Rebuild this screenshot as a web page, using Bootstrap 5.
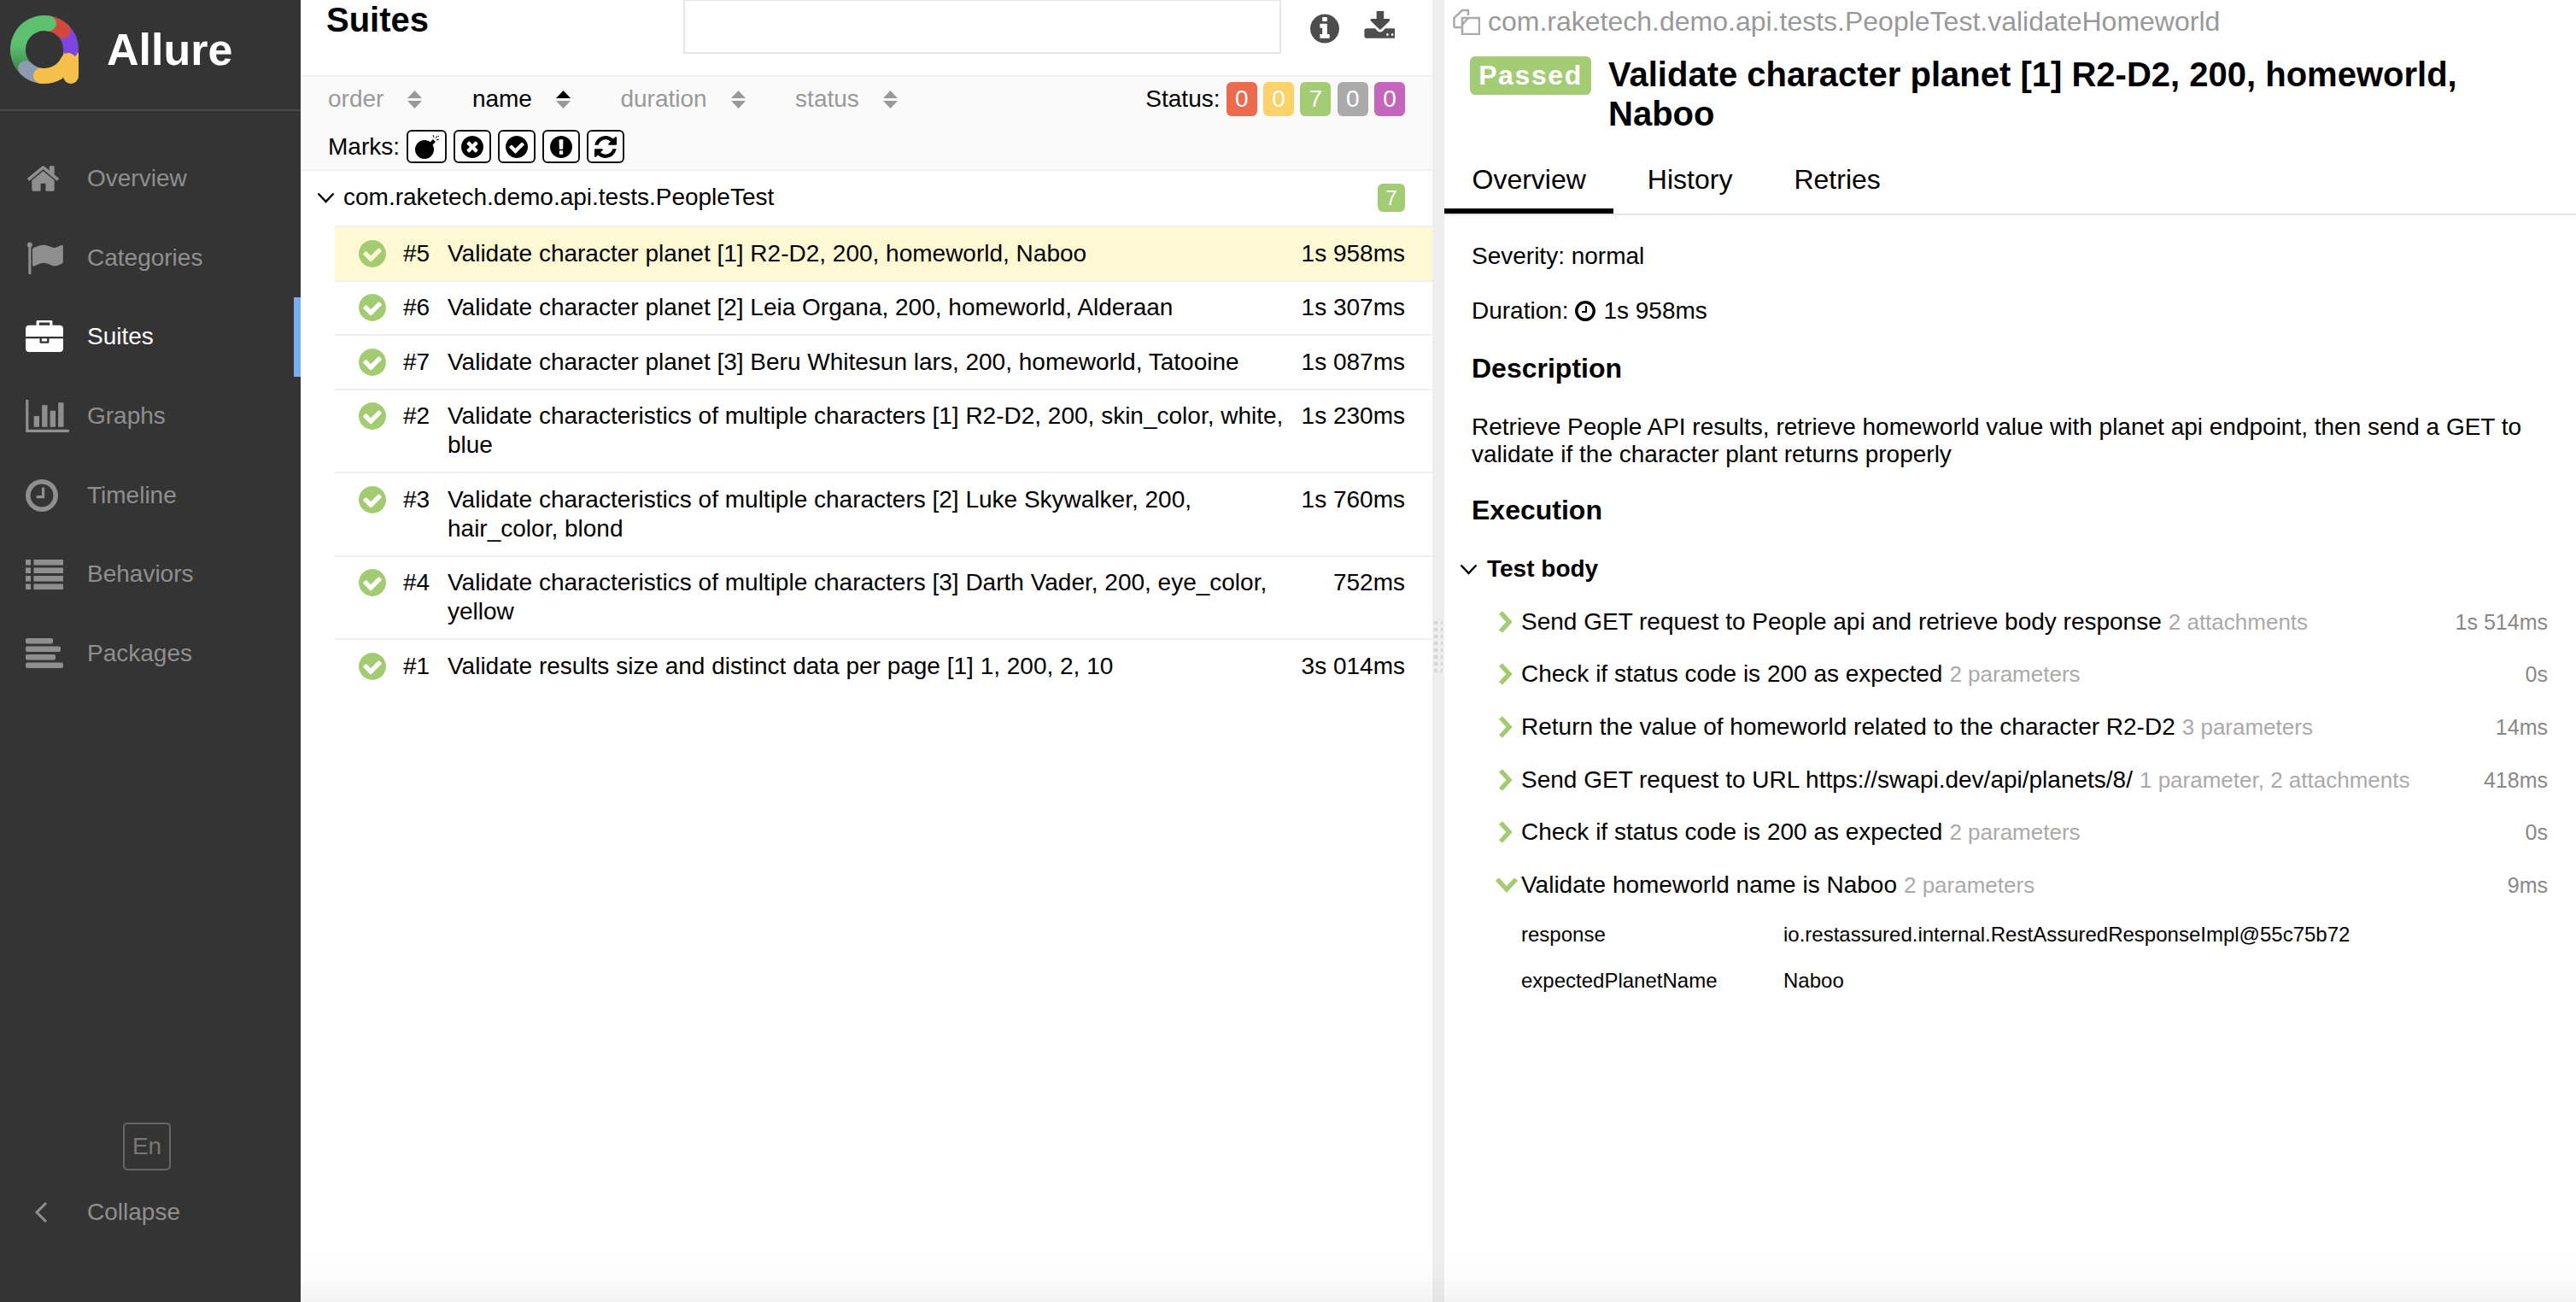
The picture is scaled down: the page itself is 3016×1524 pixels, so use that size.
<!DOCTYPE html>
<html lang="en">
<head>
    <meta charset="UTF-8">
    <meta name="viewport" content="width=device-width, initial-scale=1">
    <title>Allure Report</title>
    <link href="https://cdn.jsdelivr.net/npm/bootstrap@5.3.0/dist/css/bootstrap.min.css" rel="stylesheet">
    <style>
        html, body { height: 100%; overflow: hidden; }
        body { font-family: "Liberation Sans", Arial, sans-serif; font-size: 28px; line-height: 34px; color: #000; background: #fff; }

        /* Sidebar */
        .side-bar { width: 352px; flex: 0 0 352px; background: #343434; color: #999; }
        .side-brand { height: 130px; border-bottom: 2px solid #4a4a4a; padding: 18px 0 0 12px; gap: 33px; }
        .side-brand span { font-size: 52px; line-height: 80px; font-weight: 700; color: #fff; }
        .side-menu { padding-top: 33px; }
        .side-item { height: 92.6px; position: relative; color: #8f8f8f; }
        .side-item.on { color: #fff; }
        .side-item.on::after { content: ""; position: absolute; right: 0; top: 0; bottom: 0; width: 8px; background: #76b0ee; }
        .side-ico { width: 102px; padding-left: 30px; flex: none; display: flex; }
        .side-ico svg { fill: currentColor; display: block; }
        .lang-btn { width: 56px; height: 56px; margin: 0 0 32px 144px; border: 2px solid #666; border-radius: 5px; color: #777; font-size: 28px; }
        .side-foot { padding-bottom: 88px; }
        .collapse-row { color: #8f8f8f; height: 34px; }

        /* Suites pane */
        .suites-pane { width: 1325px; flex: 0 0 1325px; }
        .suites-head { height: 90px; border-bottom: 2px solid #f0f0f0; padding-left: 30px; }
        .suites-head h1 { font-size: 40px; line-height: 46px; font-weight: 700; margin: 0; width: 418px; flex: none; }
        .search-box { width: 700px; height: 64px; margin-top: -1px; border: 2px solid #e6e6e6; border-radius: 0; }
        .head-ico { margin-top: -1px; }
        .sort-bar { height: 110px; background: #fafafa; border-bottom: 2px solid #f0f0f0; padding: 9px 32px 0 32px; }
        .sort-line { height: 34px; }
        .sort-item { color: #999; gap: 28px; margin-right: 58.500px; }
        .sort-item.on { color: #000; }
        .carets { width: 17px; flex: none; display: block; }
        .st-badge { width: 36px; height: 40px; border-radius: 6px; color: #fff; font-size: 28px; line-height: 40px; text-align: center; margin-left: 7.300px; }
        .marks-line { margin-top: 19px; gap: 8px; }
        .mark-btn { width: 44px; height: 39px; border: 2px solid #111; border-radius: 6px; background: #fff; padding: 0; }
        .mark-btn.wide { width: 47px; }
        .c-failed { background: #ec6a4e; }
        .c-broken { background: #f9d269; }
        .c-passed { background: #a4cc74; }
        .c-skipped { background: #aaaaaa; }
        .c-unknown { background: #c565bb; }
        .group-row { height: 64px; padding: 0 32px 2px 19px; gap: 10px; }
        .group-row .count { width: 32px; height: 33px; border-radius: 6px; color: #fff; font-size: 24px; line-height: 33px; text-align: center; }
        .case-list { margin-left: 40px; border-radius: 0; }
        .case-list .case-row { border: 0; border-top: 2px solid #f0f0f0; border-radius: 0; padding: 13.750px 32px 13.750px 28px; background: transparent; color: #000; font-size: 28px; line-height: 34px; }
        .case-list .case-row.picked { background: #fef9d2; }
        .case-row .tick { width: 32px; height: 32px; fill: #a3cc72; flex: none; margin: 1px 20px 0 0; }
        .case-row .num { width: 52px; flex: none; }
        .case-row .title-text { width: 991px; flex: none; }

        /* Gutter */
        .gutter { width: 14px; flex: 0 0 14px; background: #eceef0; position: relative; }
        .gutter svg { position: absolute; left: 2px; top: 727px; }

        /* Test pane */
        .test-pane { flex: 1 1 auto; min-width: 0; }
        .full-name { height: 50px; padding-left: 10px; color: #999; font-size: 32px; gap: 9px; }
        .title-line { padding: 16px 40px 0 30px; gap: 20px; min-height: 0; }
        .status-pill { background: #a4cc74; color: #fff; font-weight: 700; font-size: 32px; line-height: 45px; height: 45px; width: 142px; border-radius: 6px; text-align: center; letter-spacing: 1.600px; flex: none; }
        .title-line h2 { font-size: 40px; line-height: 46px; font-weight: 700; margin: -2px 0 0; width: 1100px; }
        .tab-line { height: 68px; margin-top: 28px; border-bottom: 2px solid #e5e5e5; gap: 7px; }
        .tab-link { padding: 4px 32.500px 0; font-size: 32px; line-height: 44px; height: 66px; color: #000; border-bottom: 6px solid transparent; }
        .tab-link.on { border-bottom-color: #000; }
        .test-body { padding: 31px 33px 0 32px; }
        .meta-line { height: 34px; margin-bottom: 30px; }
        .meta-line svg { fill: #000; margin: 0 9px 0 0; }
        .sec-title { font-size: 32px; line-height: 40px; font-weight: 700; margin: 0; }
        .desc-text { margin: 33px 0 0; line-height: 32px; width: 1250px; }
        .exec-title { margin-top: 29px; }
        .body-toggle { height: 62px; margin: 18px 0 0 -14px; font-weight: 700; gap: 11px; }
        .step-line { height: 61.600px; }
        .step-arrow { width: 26px; flex: none; margin: 0 4px 0 28px; display: block; }
        .step-extra { color: #aaa; font-size: 26px; margin-left: 8px; }
        .step-time { color: #888; font-size: 25px; margin-left: auto; }
        .param-line { height: 54px; font-size: 24px; padding-left: 58px; }
        .param-line .pn { width: 307px; flex: none; }

        /* fade at the bottom edge of the window */
        .bottom-fade { position: absolute; left: 352px; right: 0; bottom: 0; height: 60px; pointer-events: none; background: linear-gradient(to bottom, rgba(0,0,0,0), rgba(0,0,0,.012) 50%, rgba(0,0,0,.045)); }
    </style>
</head>
<body>
<div class="d-flex h-100 position-relative">

    <!-- Sidebar -->
    <aside class="side-bar d-flex flex-column">
        <div class="side-brand d-flex align-items-start">
            <svg width="80" height="80" viewBox="0 0 80 80" fill="none" stroke-width="18" stroke-linecap="round">
                <defs>
                    <linearGradient id="gr" x1="0" y1="0" x2="0" y2="1"><stop offset="0.5" stop-color="#5cc06e"/><stop offset="1" stop-color="#3d8a50"/></linearGradient>
                </defs>
                <path d="M71 46V71" stroke="#f4bf4b"/>
                <path d="M62 18A31 31 0 0 1 71 40" stroke="#7b45e0"/>
                <path d="M45 9.500A31 31 0 0 1 62 18" stroke="#d2483f"/>
                <path d="M45 9.500A31 31 0 0 0 18 62" stroke="url(#gr)"/>
                <path d="M18 62A31 31 0 0 0 36 70.700" stroke="#8c9bb0"/>
                <path d="M36 70.700A31 31 0 0 0 68 53" stroke="#f4bf4b"/>
            </svg>
            <span>Allure</span>
        </div>
        <nav class="side-menu">
            <div class="side-item d-flex align-items-center">
                <span class="side-ico"><svg width="41" height="36" viewBox="0 0 1792 1536"><path transform="translate(0,-128)" d="M1472 992v480q0 26-19 45t-45 19h-384v-384h-256v384h-384q-26 0-45-19t-19-45v-480q0-1 .5-3t.5-3l575-474 575 474q1 2 1 6zm223-69l-62 74q-8 9-21 11h-3q-13 0-21-7l-692-577-692 577q-12 8-24 7-13-2-21-11l-62-74q-8-10-7-23.500t11-21.500l719-599q32-26 76-26t76 26l244 204v-195q0-14 9-23t23-9h192q14 0 23 9t9 23v408l219 182q10 8 11 21.500t-7 23.500z"/></svg></span>
                <span>Overview</span>
            </div>
            <div class="side-item d-flex align-items-center">
                <span class="side-ico"><svg width="44" height="39" viewBox="0 64 1792 1600"><path d="M320 256q0 72-64 110v1266q0 13-9.500 22.500t-22.500 9.500h-64q-13 0-22.500-9.500t-9.500-22.500v-1266q-64-38-64-110 0-53 37.500-90.500t90.500-37.500 90.500 37.500 37.500 90.500zm1472 64v763q0 25-12.500 38.500t-39.500 27.500q-215 116-369 116-61 0-123.500-22t-108.500-48-115.500-48-142.500-22q-192 0-464 146-17 9-33 9-26 0-45-19t-19-45v-742q0-32 31-55 21-14 79-43 236-120 421-120 107 0 200 29t219 88q38 19 88 19 54 0 117.500-21t110-47 88-47 54.500-21q26 0 45 19t19 45z"/></svg></span>
                <span>Categories</span>
            </div>
            <div class="side-item on d-flex align-items-center">
                <span class="side-ico"><svg width="44" height="38" viewBox="0 32 1792 1536"><path d="M640 256h512v-128h-512v128zm1152 640v480q0 66-47 113t-113 47h-1472q-66 0-113-47t-47-113v-480h672v160q0 26 19 45t45 19h320q26 0 45-19t19-45v-160h672zm-768 0v128h-256v-128h256zm768-480v384h-1792v-384q0-66 47-113t113-47h352v-160q0-40 28-68t68-28h576q40 0 68 28t28 68v160h352q66 0 113 47t47 113z"/></svg></span>
                <span>Suites</span>
            </div>
            <div class="side-item d-flex align-items-center">
                <span class="side-ico"><svg width="51" height="38" viewBox="0 128 2048 1536"><path d="M640 896v512h-256v-512h256zm384-512v1024h-256v-1024h256zm1024 1152v128h-2048v-1536h128v1408h1920zm-640-896v768h-256v-768h256zm384-384v1152h-256v-1152h256z"/></svg></span>
                <span>Graphs</span>
            </div>
            <div class="side-item d-flex align-items-center">
                <span class="side-ico"><svg width="38" height="38" viewBox="128 128 1536 1536"><path d="M1024 544v448q0 14-9 23t-23 9h-320q-14 0-23-9t-9-23v-64q0-14 9-23t23-9h224v-352q0-14 9-23t23-9h64q14 0 23 9t9 23zm416 352q0-148-73-273t-198-198-273-73-273 73-198 198-73 273 73 273 198 198 273 73 273-73 198-198 73-273zm224 0q0 209-103 385.500t-279.500 279.500-385.500 103-385.500-103-279.500-279.500-103-385.500 103-385.500 279.500-279.500 385.500-103 385.500 103 279.500 279.500 103 385.500z"/></svg></span>
                <span>Timeline</span>
            </div>
            <div class="side-item d-flex align-items-center">
                <span class="side-ico"><svg width="44" height="35" viewBox="0 0 44 35"><rect width="6" height="6.500"/><rect x="9.500" width="34.500" height="6.500"/><rect y="9.500" width="6" height="6.500"/><rect x="9.500" y="9.500" width="34.500" height="6.500"/><rect y="19" width="6" height="6.500"/><rect x="9.500" y="19" width="34.500" height="6.500"/><rect y="28.500" width="6" height="6.500"/><rect x="9.500" y="28.500" width="34.500" height="6.500"/></svg></span>
                <span>Behaviors</span>
            </div>
            <div class="side-item d-flex align-items-center">
                <span class="side-ico"><svg width="44" height="35" viewBox="0 0 44 35"><rect width="32" height="6.500" rx="2"/><rect y="9.500" width="41" height="6.500" rx="2"/><rect y="19" width="35" height="6.500" rx="2"/><rect y="28.500" width="44" height="6.500" rx="2"/></svg></span>
                <span>Packages</span>
            </div>
        </nav>
        <div class="side-foot mt-auto">
            <div class="lang-btn d-flex align-items-center justify-content-center">En</div>
            <div class="collapse-row d-flex align-items-center">
                <span class="side-ico"><svg style="margin-left:10px" width="16" height="26" viewBox="0 0 16 26" fill="none"><path d="M14 2L3 13L14 24" fill="none" stroke="#8f8f8f" stroke-width="3"/></svg></span>
                <span>Collapse</span>
            </div>
        </div>
    </aside>

    <!-- Suites pane -->
    <section class="suites-pane d-flex flex-column">
        <div class="suites-head d-flex align-items-start">
            <h1>Suites</h1>
            <input class="form-control search-box" type="text" aria-label="Search">
            <svg class="head-ico" style="margin:16px 0 0 34px" width="34" height="35" viewBox="128 128 1536 1536" fill="#4d4d4d"><path d="M1152 1376v-160q0-14-9-23t-23-9h-96v-512q0-14-9-23t-23-9h-320q-14 0-23 9t-9 23v160q0 14 9 23t23 9h96v320h-96q-14 0-23 9t-9 23v160q0 14 9 23t23 9h448q14 0 23-9t9-23zm-128-896v-160q0-14-9-23t-23-9h-192q-14 0-23 9t-9 23v160q0 14 9 23t23 9h192q14 0 23-9t9-23zm640 416q0 209-103 385.500t-279.500 279.500-385.500 103-385.500-103-279.500-279.500-103-385.500 103-385.500 279.500-279.500 385.500-103 385.500 103 279.500 279.500 103 385.500z"/></svg>
            <svg class="head-ico" style="margin:13px 0 0 28px" width="37" height="35" viewBox="0 128 1664 1536" fill="#4d4d4d"><path d="M1344 1344q0-26-19-45t-45-19-45 19-19 45 19 45 45 19 45-19 19-45zm256 0q0-26-19-45t-45-19-45 19-19 45 19 45 45 19 45-19 19-45zm128-224v320q0 40-28 68t-68 28h-1472q-40 0-68-28t-28-68v-320q0-40 28-68t68-28h465l135 136q58 56 136 56t136-56l136-136h464q40 0 68 28t28 68zm-325-569q17 41-14 70l-448 448q-18 19-45 19t-45-19l-448-448q-31-29-14-70 17-39 59-39h256v-448q0-26 19-45t45-19h256q26 0 45 19t19 45v448h256q42 0 59 39z"/></svg>
        </div>

        <div class="sort-bar">
            <div class="sort-line d-flex align-items-center">
                <div class="sort-item d-flex align-items-center"><span>order</span><svg class="carets" height="21" viewBox="0 0 17 21"><path d="M8.500 0L17 9H0z" fill="#999"/><path d="M8.500 21L17 12H0z" fill="#999"/></svg></div>
                <div class="sort-item on d-flex align-items-center"><span>name</span><svg class="carets" height="21" viewBox="0 0 17 21"><path d="M8.500 0L17 9H0z" fill="#000"/><path d="M8.500 21L17 12H0z" fill="#999"/></svg></div>
                <div class="sort-item d-flex align-items-center"><span>duration</span><svg class="carets" height="21" viewBox="0 0 17 21"><path d="M8.500 0L17 9H0z" fill="#999"/><path d="M8.500 21L17 12H0z" fill="#999"/></svg></div>
                <div class="sort-item d-flex align-items-center"><span>status</span><svg class="carets" height="21" viewBox="0 0 17 21"><path d="M8.500 0L17 9H0z" fill="#999"/><path d="M8.500 21L17 12H0z" fill="#999"/></svg></div>
                <div class="ms-auto d-flex align-items-center">
                    <span>Status:</span>
                    <span class="st-badge c-failed">0</span>
                    <span class="st-badge c-broken">0</span>
                    <span class="st-badge c-passed">7</span>
                    <span class="st-badge c-skipped">0</span>
                    <span class="st-badge c-unknown">0</span>
                </div>
            </div>
            <div class="marks-line d-flex align-items-center">
                <span>Marks:</span>
                <button class="mark-btn wide d-flex align-items-center justify-content-center" type="button" aria-label="flaky">
                    <svg width="32" height="30" viewBox="0 0 32 30"><circle cx="13" cy="18" r="11"/><path d="M19 10l4-4 3 3-4 4z"/><path d="M26 5l2-3M27 7l3-1M24 4l-1-3M29 3l1-1" stroke="#000" stroke-width="1" fill="none"/></svg>
                </button>
                <button class="mark-btn d-flex align-items-center justify-content-center" type="button" aria-label="new failed"><svg width="26" height="26" viewBox="128 128 1536 1536"><path d="M1277 1122q0-26-19-45l-181-181 181-181q19-19 19-45 0-27-19-46l-90-90q-19-19-46-19-26 0-45 19l-181 181-181-181q-19-19-45-19-27 0-46 19l-90 90q-19 19-19 46 0 26 19 45l181 181-181 181q-19 19-19 45 0 27 19 46l90 90q19 19 46 19 26 0 45-19l181-181 181 181q19 19 45 19 27 0 46-19l90-90q19-19 19-46zm387-226q0 209-103 385.500t-279.500 279.500-385.500 103-385.500-103-279.500-279.500-103-385.500 103-385.500 279.500-279.500 385.500-103 385.500 103 279.500 279.500 103 385.500z"/></svg></button>
                <button class="mark-btn d-flex align-items-center justify-content-center" type="button" aria-label="new passed"><svg width="26" height="26" viewBox="128 128 1536 1536"><path d="M1412 734q0-28-18-46l-91-90q-19-19-45-19t-45 19l-408 407-226-226q-19-19-45-19t-45 19l-91 90q-18 18-18 46 0 27 18 45l362 362q19 19 45 19 27 0 46-19l543-543q18-18 18-45zm252 162q0 209-103 385.500t-279.500 279.500-385.500 103-385.500-103-279.500-279.500-103-385.500 103-385.500 279.500-279.500 385.500-103 385.500 103 279.500 279.500 103 385.500z"/></svg></button>
                <button class="mark-btn d-flex align-items-center justify-content-center" type="button" aria-label="new broken"><svg width="26" height="26" viewBox="128 128 1536 1536"><path d="M896 128q209 0 385.500 103t279.500 279.500 103 385.500-103 385.500-279.500 279.500-385.500 103-385.500-103-279.500-279.500-103-385.500 103-385.500 279.500-279.500 385.500-103zm128 1247v-190q0-14-9-23.500t-22-9.500h-192q-13 0-23 10t-10 23v190q0 13 10 23t23 10h192q13 0 22-9.500t9-23.500zm-2-344l18-621q0-12-10-18-10-8-24-8h-220q-14 0-24 8-10 6-10 18l17 621q0 10 10 17.500t24 7.500h185q14 0 23.500-7.500t10.500-17.500z"/></svg></button>
                <button class="mark-btn d-flex align-items-center justify-content-center" type="button" aria-label="retries"><svg width="26" height="26" viewBox="128 128 1536 1536"><path d="M1639 1056q0 5-1 7-64 268-268 434.500t-478 166.500q-146 0-282.500-55t-243.500-157l-129 129q-19 19-45 19t-45-19-19-45v-448q0-26 19-45t45-19h448q26 0 45 19t19 45-19 45l-137 137q71 66 161 102t187 36q134 0 250-65t186-179q11-17 53-117 8-23 30-23h192q13 0 22.500 9.500t9.500 22.500zm25-800v448q0 26-19 45t-45 19h-448q-26 0-45-19t-19-45 19-45l138-138q-148-137-349-137-134 0-250 65t-186 179q-11 17-53 117-8 23-30 23h-199q-13 0-22.500-9.500t-9.500-22.500v-7q65-268 270-434.500t480-166.500q146 0 284 55.500t245 156.500l130-129q19-19 45-19t45 19 19 45z"/></svg></button>
            </div>
        </div>

        <div class="group-row d-flex align-items-center">
            <svg width="21" height="13" viewBox="0 0 21 13"><path d="M1.500 1.500L10.500 11L19.500 1.500" fill="none" stroke="#000" stroke-width="2.500"/></svg>
            <span>com.raketech.demo.api.tests.PeopleTest</span>
            <span class="count c-passed ms-auto">7</span>
        </div>

        <div class="list-group case-list" id="cases"></div>
    </section>

    <div class="gutter">
        <svg width="10" height="60" viewBox="0 0 10 60"><defs><pattern id="dots" width="8" height="8" patternUnits="userSpaceOnUse"><rect width="4" height="4" fill="#d4d6d8"/></pattern></defs><rect width="10" height="60" fill="url(#dots)"/></svg>
    </div>

    <!-- Test result pane -->
    <section class="test-pane d-flex flex-column">
        <div class="full-name d-flex align-items-center">
            <svg width="32" height="32" viewBox="0 0 32 32" fill="none" stroke="#aaa" stroke-width="2.500"><path d="M1.500 23V12L11 3H18V9"/><path d="M1.500 23H11"/><path d="M11 12H31V31H11z"/><path d="M11 20L18 12"/></svg>
            <span>com.raketech.demo.api.tests.PeopleTest.validateHomeworld</span>
        </div>
        <div class="title-line d-flex align-items-start">
            <span class="status-pill">Passed</span>
            <h2>Validate character planet [1] R2-D2, 200, homeworld, Naboo</h2>
        </div>
        <div class="tab-line d-flex">
            <a class="tab-link on text-decoration-none" href="#">Overview</a>
            <a class="tab-link text-decoration-none" href="#">History</a>
            <a class="tab-link text-decoration-none" href="#">Retries</a>
        </div>
        <div class="test-body">
            <div class="meta-line">Severity: normal</div>
            <div class="meta-line d-flex align-items-center">Duration:&nbsp;<svg width="24" height="24" viewBox="128 128 1536 1536"><path d="M1024 544v448q0 14-9 23t-23 9h-320q-14 0-23-9t-9-23v-64q0-14 9-23t23-9h224v-352q0-14 9-23t23-9h64q14 0 23 9t9 23zm416 352q0-148-73-273t-198-198-273-73-273 73-198 198-73 273 73 273 198 198 273 73 273-73 198-198 73-273zm224 0q0 209-103 385.500t-279.500 279.500-385.500 103-385.500-103-279.500-279.500-103-385.500 103-385.500 279.500-279.500 385.500-103 385.500 103 279.500 279.500 103 385.500z"/></svg>1s 958ms</div>
            <h3 class="sec-title">Description</h3>
            <p class="desc-text">Retrieve People API results, retrieve homeworld value with planet api endpoint, then send a GET to validate if the character plant returns properly</p>
            <h3 class="sec-title exec-title">Execution</h3>
            <div class="body-toggle d-flex align-items-center">
                <svg width="21" height="13" viewBox="0 0 21 13"><path d="M1.500 1.500L10.500 11L19.500 1.500" fill="none" stroke="#000" stroke-width="2.500"/></svg>
                <span>Test body</span>
            </div>
            <div id="steps"></div>
        </div>
    </section>

    <div class="bottom-fade"></div>
</div>

<script src="https://cdn.jsdelivr.net/npm/bootstrap@5.3.0/dist/js/bootstrap.bundle.min.js"></script>
<script>
    // rows of the suites list
    const cases = [
        ["#5", "Validate character planet [1] R2-D2, 200, homeworld, Naboo", "1s 958ms", true],
        ["#6", "Validate character planet [2] Leia Organa, 200, homeworld, Alderaan", "1s 307ms"],
        ["#7", "Validate character planet [3] Beru Whitesun lars, 200, homeworld, Tatooine", "1s 087ms"],
        ["#2", "Validate characteristics of multiple characters [1] R2-D2, 200, skin_color, white, blue", "1s 230ms"],
        ["#3", "Validate characteristics of multiple characters [2] Luke Skywalker, 200, hair_color, blond", "1s 760ms"],
        ["#4", "Validate characteristics of multiple characters [3] Darth Vader, 200, eye_color, yellow", "752ms"],
        ["#1", "Validate results size and distinct data per page [1] 1, 200, 2, 10", "3s 014ms"]
    ];
    const tick = '<svg class="tick" viewBox="128 128 1536 1536"><path d="M1412 734q0-28-18-46l-91-90q-19-19-45-19t-45 19l-408 407-226-226q-19-19-45-19t-45 19l-91 90q-18 18-18 46 0 27 18 45l362 362q19 19 45 19 27 0 46-19l543-543q18-18 18-45zm252 162q0 209-103 385.500t-279.500 279.500-385.500 103-385.500-103-279.500-279.500-103-385.500 103-385.500 279.500-279.500 385.500-103 385.500 103 279.500 279.500 103 385.500z"/></svg>';
    document.getElementById("cases").innerHTML = cases.map(c =>
        `<div class="list-group-item case-row d-flex align-items-start${c[3] ? " picked" : ""}">${tick}<span class="num">${c[0]}</span><span class="title-text">${c[1]}</span><span class="ms-auto">${c[2]}</span></div>`
    ).join("");

    // steps of the test body
    const steps = [
        ["Send GET request to People api and retrieve body response", "2 attachments", "1s 514ms"],
        ["Check if status code is 200 as expected", "2 parameters", "0s"],
        ["Return the value of homeworld related to the character R2-D2", "3 parameters", "14ms"],
        ["Send GET request to URL https://swapi.dev/api/planets/8/", "1 parameter, 2 attachments", "418ms"],
        ["Check if status code is 200 as expected", "2 parameters", "0s"],
        ["Validate homeworld name is Naboo", "2 parameters", "9ms", true]
    ];
    const arrowRight = '<svg class="step-arrow" height="26" viewBox="0 0 26 26"><path d="M6 2L16 13L6 24" fill="none" stroke="#a3cc72" stroke-width="5.500"/></svg>';
    const arrowDown = '<svg class="step-arrow" height="26" viewBox="0 0 26 26"><path d="M2 6L13 18L24 6" fill="none" stroke="#a3cc72" stroke-width="5.500"/></svg>';
    document.getElementById("steps").innerHTML = steps.map(s =>
        `<div class="step-line d-flex align-items-center">${s[3] ? arrowDown : arrowRight}<span class="step-name">${s[0]}</span><span class="step-extra">${s[1]}</span><span class="step-time">${s[2]}</span></div>`
    ).join("") +
        '<div class="param-line d-flex align-items-center"><span class="pn">response</span><span>io.restassured.internal.RestAssuredResponseImpl@55c75b72</span></div>' +
        '<div class="param-line d-flex align-items-center"><span class="pn">expectedPlanetName</span><span>Naboo</span></div>';
</script>
</body>
</html>
